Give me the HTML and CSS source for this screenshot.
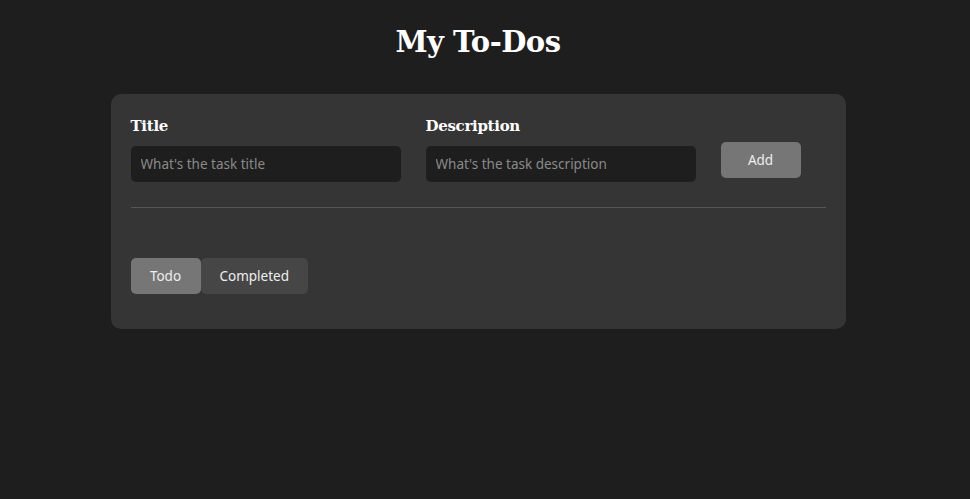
FILE: index.html
```html
<!DOCTYPE html>
<html>
<head>
<meta charset="utf-8">
<link rel="stylesheet" href="styles.css">
</head>
<body>
<h1 class="page-title">My To-Dos</h1>
<div class="card">
  <div class="form-row">
    <div class="field">
      <label class="label">Title</label>
      <input class="input" type="text" placeholder="What's the task title">
    </div>
    <div class="field">
      <label class="label">Description</label>
      <input class="input" type="text" placeholder="What's the task description">
    </div>
    <div class="field field-btn">
      <button class="add-btn">Add</button>
    </div>
  </div>
  <hr class="divider">
  <div class="tabs">
    <button class="tab active">Todo</button>
    <button class="tab">Completed</button>
  </div>
</div>
</body>
</html>
```
FILE: styles.css
```css
html, body {
  margin: 0;
  padding: 0;
  background: #1e1e1e;
  color: #fff;
  font-family: "Noto Sans", "Open Sans", sans-serif;
}
body {
  padding-right: 14px;
}
.page-title {
  font-family: "DejaVu Serif", serif;
  font-size: 29px;
  font-weight: bold;
  text-align: center;
  margin: 0;
  padding-top: 25px;
  height: 72px;
  box-sizing: border-box;
  letter-spacing: -0.5px;
}
.card {
  width: 735px;
  margin: 22px auto 0 auto;
  background: #353535;
  border-radius: 10px;
  padding: 20px 20px 35px 20px;
  box-sizing: border-box;
}
.form-row {
  display: flex;
  gap: 25px;
  align-items: flex-start;
}
.field {
  display: flex;
  flex-direction: column;
}
.label {
  font-family: "DejaVu Serif", serif;
  font-weight: bold;
  font-size: 15px;
  line-height: 22px;
  margin-top: 1px;
  margin-bottom: 9px;
  letter-spacing: -0.3px;
}
.input {
  width: 270px;
  height: 36px;
  box-sizing: border-box;
  background: #1e1e1e;
  border: none;
  border-radius: 5px;
  padding: 0 10px;
  color: #fff;
  font-family: "Noto Sans", sans-serif;
  font-size: 13.5px;
  outline: none;
}
.input::placeholder {
  color: #8a8a8a;
}
.field-btn {
  padding-top: 28px;
}
.add-btn {
  width: 80px;
  height: 36px;
  background: #767676;
  border: none;
  border-radius: 5px;
  color: #eee;
  font-family: "Noto Sans", sans-serif;
  font-size: 13.5px;
}
.divider {
  border: none;
  border-top: 1px solid #555;
  margin: 25px 0 50px 0;
}
.tabs {
  display: flex;
}
.tab {
  height: 36px;
  border: none;
  border-radius: 5px;
  background: #464646;
  color: #eee;
  font-family: "Noto Sans", sans-serif;
  font-size: 13.5px;
  padding: 0 19px;
}
.tab.active {
  background: #767676;
  width: 70px;
  padding: 0;
}
```
